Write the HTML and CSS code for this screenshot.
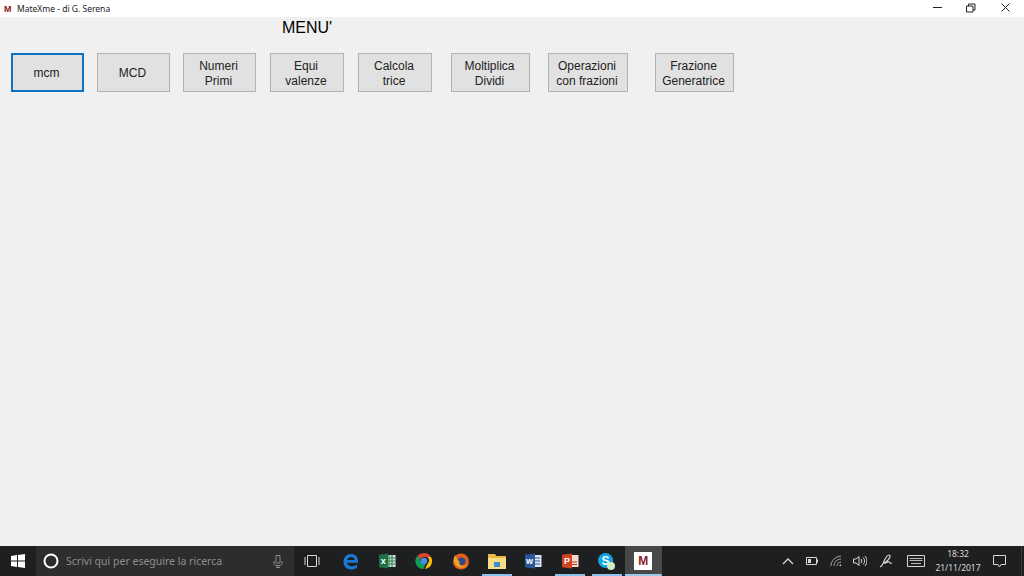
FILE: index.html
```html
<!DOCTYPE html>
<html lang="it">
<head>
<meta charset="utf-8">
<title>MateXme - di G. Serena</title>
<link rel="stylesheet" href="styles.css">
</head>
<body>
<div class="window">
  <header class="titlebar">
    <span class="app-m">M</span>
    <span class="app-title">MateXme - di G. Serena</span>
    <div class="win-controls">
      <svg class="wc" width="46" height="17" viewBox="0 0 46 17"><path d="M13 7.500h9" stroke="#222" fill="none"/></svg>
      <svg class="wc" width="22" height="17" viewBox="0 0 22 17"><path d="M.5 6h6.500v6H.5zM2.500 6V4h6.500v6H7" stroke="#222" fill="none"/></svg>
      <svg class="wc" width="36" height="17" viewBox="0 0 36 17"><path d="M13.500 3.500l8 8M21.500 3.500l-8 8" stroke="#222" fill="none"/></svg>
    </div>
  </header>
  <main class="content">
    <h1 class="menu-title">MENU'</h1>
    <div class="buttons">
      <button class="btn btn-focus w73">mcm</button>
      <button class="btn w73">MCD</button>
      <button class="btn w73">Numeri<br>Primi</button>
      <button class="btn w74 ml1">Equi<br>valenze</button>
      <button class="btn w74 ml1">Calcola<br>trice</button>
      <button class="btn w79 ml6">Moltiplica<br>Dividi</button>
      <button class="btn w80 ml5">Operazioni<br>con frazioni</button>
      <button class="btn w79 ml14">Frazione<br>Generatrice</button>
    </div>
  </main>
</div>
<footer class="taskbar">
  <div class="start">
    <svg width="16" height="16" viewBox="0 0 16 16"><path fill="#fff" d="M1 3l6-.9v5.500H1zM8 2l7-1v6.600H8zM1 8.400h6V14l-6-.9zM8 8.400h7V15l-7-1z"/></svg>
  </div>
  <div class="search">
    <svg class="cortana" width="16" height="16" viewBox="0 0 16 16"><circle cx="8" cy="8" r="6.500" fill="none" stroke="#fff" stroke-width="2"/></svg>
    <span class="search-text">Scrivi qui per eseguire la ricerca</span>
    <svg class="mic" width="10" height="14" viewBox="0 0 10 14"><path d="M3 1.500h4v7.500H3zM1 7v2.500c0 1 1 2 2 2h4c1 0 2-1 2-2V7M5 11.500v2M3 13.500h4" fill="none" stroke="#8a8a8a"/></svg>
  </div>
  <div class="task-icons">
    <div class="tb tb-view"><svg width="16" height="14" viewBox="0 0 16 14"><path d="M3.500 1.500h9v11h-9zM1 3v8M15 3v8" fill="none" stroke="#d8d8d8"/></svg></div>
    <div class="tb"><svg width="16" height="17" viewBox="0 0 16 17"><path fill="#1a78d2" d="M8.200 1C3.500 1 .5 4.500.5 9c0 4.500 3.200 7.500 7.500 7.500 2.600 0 4.600-.8 6-1.800v-3.200c-1.500 1-3.300 1.800-5.400 1.800-2.500 0-4.300-1.300-4.500-3.500h11v-2C15 4 12.500 1 8.200 1zM4.100 7c.3-1.800 1.900-3.100 4-3.100 2 0 3.300 1.200 3.400 3.100z"/></svg></div>
    <div class="tb"><svg width="17" height="16" viewBox="0 0 17 16"><rect x="6" y="2" width="10.500" height="12" fill="#cfe3d6"/><path d="M10 2v12M13 2v12M6 5h10M6 8h10M6 11h10" stroke="#2a7a4a"/><path fill="#1e7145" d="M0 1.800 9 .5v15L0 14.200z"/><text class="glyph" x="1.700" y="11.200">x</text></svg></div>
    <div class="tb"><svg width="18" height="18" viewBox="0 0 18 18"><path fill="#db4437" d="M9 1a8 8 0 0 1 7 4H9a4 4 0 0 0-3.800 2.700L2.600 3.500A8 8 0 0 1 9 1z"/><path fill="#f4c20d" d="M16 5a8 8 0 0 1-6 12l2.700-5.500A4 4 0 0 0 12 5z"/><path fill="#0f9d58" d="M2.600 3.500 6 9.500a4 4 0 0 0 4.600 2.400L8.500 17A8 8 0 0 1 2.600 3.500z"/><circle cx="9" cy="9" r="3.300" fill="#4a8cf0"/></svg></div>
    <div class="tb"><svg width="18" height="18" viewBox="0 0 18 18"><circle cx="9" cy="9.500" r="8" fill="#e0601a"/><path fill="#2a4a8a" d="M6 7c2-2 5-2 7 0 1 2 .5 4.500-1.500 5.500-2 .8-3.500.3-4.500-.5C5.500 11 5.500 9 6 7z"/><path fill="#f2a02c" d="M3 3c-2 4-1 10 3 12 4 2 9 0 11-4-1 2-5 4-8 2.500C7 12.500 6.500 10 8 9 6 9 5 8 5.500 6.500 4.500 6 3.500 5 3 3z"/></svg></div>
    <div class="tb tb-run"><svg width="20" height="17" viewBox="0 0 20 17"><path fill="#e8b93e" d="M1 1h7l1.500 2H19v13H1z"/><path fill="#f7dc86" d="M1 5h18v11H1z"/><rect x="7" y="9" width="6" height="5" fill="#3a8dd0"/></svg></div>
    <div class="tb"><svg width="17" height="16" viewBox="0 0 17 16"><rect x="7" y="2" width="9.500" height="12" fill="#dbe5f4"/><path d="M9 5h6M9 8h6M9 11h6" stroke="#2b579a"/><path fill="#2b579a" d="M0 1.800 10 .5v15L0 14.200z"/><text class="glyph" x="1" y="11.200">w</text></svg></div>
    <div class="tb tb-run"><svg width="17" height="16" viewBox="0 0 17 16"><rect x="7" y="2" width="9.500" height="12" fill="#f3d9d0"/><path d="M10 9h5M10 11.500h5" stroke="#c13b1b"/><path fill="#d04423" d="M0 1.800 10 .5v15L0 14.200z"/><text class="glyph" x="2" y="11.200">P</text></svg></div>
    <div class="tb tb-run"><svg width="19" height="19" viewBox="0 0 19 19"><circle cx="8.500" cy="8.500" r="7.500" fill="#10a5e8"/><text class="glyph glyph-s" x="4.500" y="13">S</text><circle cx="14" cy="14" r="4" fill="#cfeec0"/></svg></div>
    <div class="tb tb-active"><span class="m-tile">M</span></div>
  </div>
  <div class="tray">
    <svg class="t-chev" width="12" height="7" viewBox="0 0 12 7"><path d="M1 6l5-5 5 5" fill="none" stroke="#d8d8d8" stroke-width="1.300"/></svg>
    <svg class="t-bat" width="12" height="8" viewBox="0 0 12 8"><path d="M.5.500h10v7H.5z" fill="none" stroke="#d8d8d8"/><path d="M2 2h3v4H2z" fill="#d8d8d8"/><path d="M11 2.500h1v3h-1z" fill="#d8d8d8"/></svg>
    <svg class="t-wifi" width="12" height="12" viewBox="0 0 12 12"><path d="M1 11C1 6 5 1.500 11 1M4 11c0-3.500 3-7 7-7M7 11c0-2 2-4 4-4" fill="none" stroke="#a8a8a8"/><path d="M9 11l2-2v2z" fill="#d8d8d8"/></svg>
    <svg class="t-vol" width="14" height="12" viewBox="0 0 14 12"><path d="M.5 4h2.500L6 1.500v9L3 8H.5zM8 4c1 1 1 3 0 4M10 2.500c2 2 2 5 0 7M12 1c2.500 3 2.500 7 0 10" fill="none" stroke="#d8d8d8"/></svg>
    <svg class="t-pen" width="14" height="14" viewBox="0 0 14 14"><path d="M1 13c3-1 3-4 4-6s3-6 5-6 1 3-1 5-4 3-4 3M5 9c2 1 3-2 5-1s1 2 3 1" fill="none" stroke="#d8d8d8" stroke-width="1.100"/></svg>
    <svg class="t-kbd" width="18" height="12" viewBox="0 0 18 12"><path d="M.5.500h17v11H.5z" fill="none" stroke="#d8d8d8"/><path d="M2.500 3.500h13M2.500 5.500h13M4 8.500h10" stroke="#bbb"/></svg>
    <div class="clock"><span>18:32</span><span>21/11/2017</span></div>
    <svg class="t-note" width="13" height="13" viewBox="0 0 13 13"><path d="M.5.500h12v9H8L6.500 12 5 9.500H.5z" fill="none" stroke="#d8d8d8"/></svg>
    <span class="t-edge"></span>
  </div>
</footer>
</body>
</html>
```
FILE: styles.css
```css
* { box-sizing: border-box; }
html, body { margin: 0; height: 100%; }
body {
  width: 1024px;
  height: 576px;
  overflow: hidden;
  display: flex;
  flex-direction: column;
  background: #f0f0f0;
  font-family: "Liberation Sans", Arial, sans-serif;
}
.window { flex: 1; display: flex; flex-direction: column; min-height: 0; }

.titlebar {
  height: 17px;
  background: #fff;
  display: flex;
  align-items: center;
  padding-left: 4px;
}
.app-m { font: bold 9px "Liberation Sans", sans-serif; color: #8c1414; width: 13px; }
.app-title { font: 8.500px "Noto Sans", sans-serif; color: #222; }
.win-controls { margin-left: auto; display: flex; }
.wc { display: block; }

.content { flex: 1; }
.menu-title {
  margin: 0;
  height: 36px;
  padding: 2px 0 0 282px;
  font-weight: normal;
  font-size: 16px;
  line-height: 18px;
  color: #000;
}
.buttons { display: flex; gap: 13px; padding-left: 11px; }
.btn {
  height: 39px;
  padding: 2px 2px 0 0;
  border: 1px solid #b2b2b2;
  background: #e1e1e1;
  color: #222;
  font-family: "Liberation Sans", Arial, sans-serif;
  font-size: 12px;
  line-height: 15px;
  text-align: center;
}
.btn-focus { border: 2px solid #0c72c4; }
.w73 { width: 73px; }
.w74 { width: 74px; }
.w79 { width: 79px; }
.w80 { width: 80px; }
.ml1 { margin-left: 1px; }
.ml5 { margin-left: 5px; }
.ml6 { margin-left: 6px; }
.ml14 { margin-left: 14px; }

.taskbar {
  height: 30px;
  background: #1e1f21;
  display: flex;
  align-items: stretch;
  flex: none;
}
.start { width: 36px; display: flex; align-items: center; justify-content: center; }
.search {
  width: 258px;
  background: #2d2d2d;
  display: flex;
  align-items: center;
  padding-left: 7px;
}
.cortana { flex: none; }
.search-text {
  margin-left: 7px;
  font: 10.500px "Noto Sans", sans-serif;
  color: #8d8d8d;
  flex: 1;
}
.mic { margin-right: 11px; }
.task-icons { display: flex; width: 368px; }
.tb {
  width: 36.500px;
  display: flex;
  align-items: center;
  justify-content: center;
  flex: none;
}
.tb-view { width: 39px; padding-right: 3px; }
.tb-run {
  background: linear-gradient(#8cc3ee, #8cc3ee) center bottom / 30px 2px no-repeat;
}
.tb-active {
  background: linear-gradient(#9cc8ea, #9cc8ea) center bottom / 100% 2px no-repeat, #484848;
}
.m-tile {
  width: 18px;
  height: 18px;
  background: #fff;
  color: #8c1a24;
  font: bold 12px/18px "Liberation Sans", sans-serif;
  text-align: center;
}
.glyph { font: bold 9px "Liberation Sans", sans-serif; fill: #fff; }
.glyph-s { font-size: 12px; }

.tray { flex: 1; display: flex; align-items: center; color: #d8d8d8; }
.t-chev { margin-left: 120px; }
.t-bat { margin-left: 12px; }
.t-wifi { margin-left: 12px; }
.t-vol { margin-left: 11px; }
.t-pen { margin-left: 12px; }
.t-kbd { margin-left: 14px; }
.clock {
  margin-left: 8px;
  width: 50px;
  display: flex;
  flex-direction: column;
  align-items: center;
  font: 8.500px/14px "Noto Sans", sans-serif;
  color: #d8d8d8;
}
.t-note { margin-left: 10px; }
.t-edge { width: 1px; height: 100%; margin-left: 15px; background: #3a3b3d; }
```
